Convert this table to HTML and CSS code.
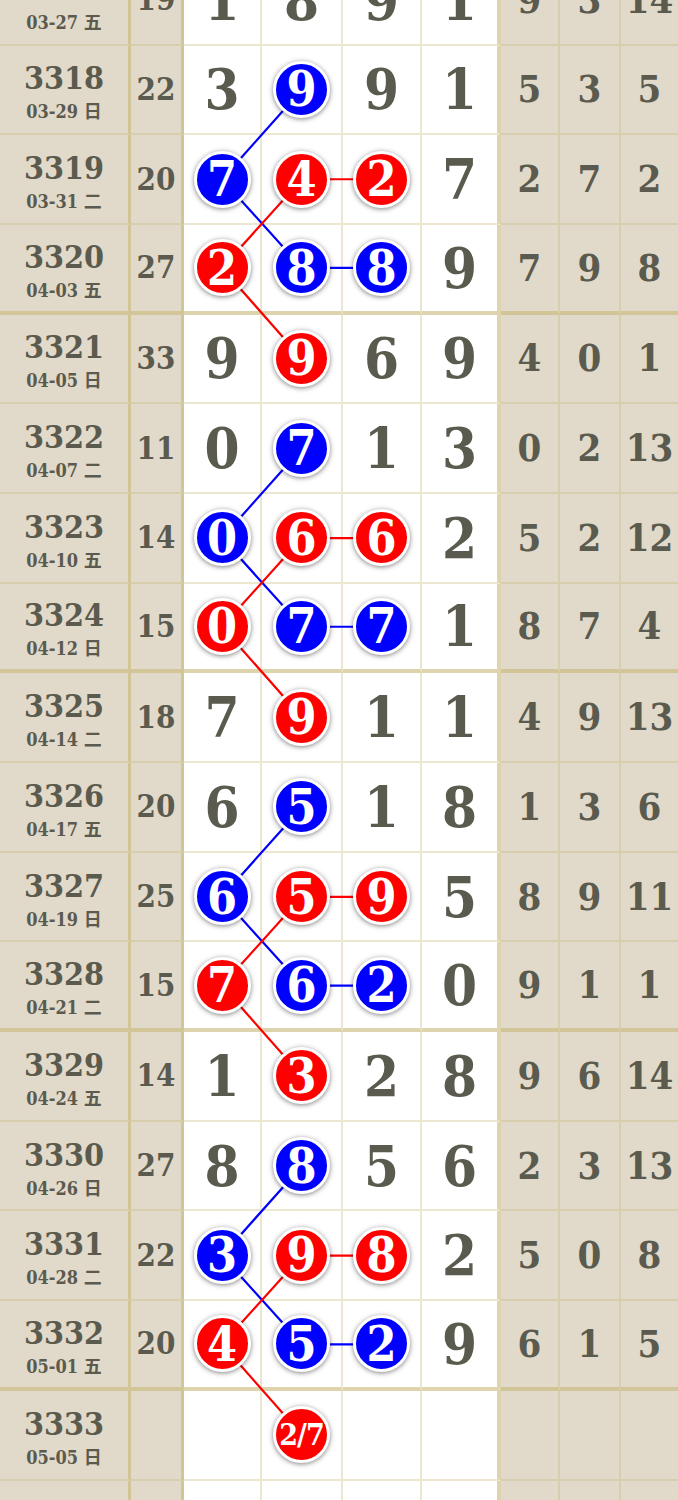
FILE: index.html
```html
<!DOCTYPE html>
<html lang="zh">
<head>
<meta charset="utf-8">
<title>走势图</title>
<link rel="stylesheet" href="styles.css">
</head>
<body>
<div class="sheet">
  <svg class="links" width="678" height="1615" viewBox="0 0 678 1615">
    <g fill="none" stroke-width="2.2">
      <polyline stroke="#0000ff" points="302,133.55 222,223.25 302,311.95"/>
      <polyline stroke="#ff0000" points="302,223.25 222,311.95 302,402.65"/>
      <line stroke="#ff0000" x1="302" y1="223.25" x2="381.5" y2="223.25"/>
      <line stroke="#0000ff" x1="302" y1="311.95" x2="381.5" y2="311.95"/>

      <polyline stroke="#0000ff" points="302,492.35 222,582.05 302,670.75"/>
      <polyline stroke="#ff0000" points="302,582.05 222,670.75 302,761.45"/>
      <line stroke="#ff0000" x1="302" y1="582.05" x2="381.5" y2="582.05"/>
      <line stroke="#0000ff" x1="302" y1="670.75" x2="381.5" y2="670.75"/>

      <polyline stroke="#0000ff" points="302,851.15 222,940.85 302,1029.55"/>
      <polyline stroke="#ff0000" points="302,940.85 222,1029.55 302,1120.25"/>
      <line stroke="#ff0000" x1="302" y1="940.85" x2="381.5" y2="940.85"/>
      <line stroke="#0000ff" x1="302" y1="1029.55" x2="381.5" y2="1029.55"/>

      <polyline stroke="#0000ff" points="302,1209.95 222,1299.65 302,1388.35"/>
      <polyline stroke="#ff0000" points="302,1299.65 222,1388.35 302,1479.05"/>
      <line stroke="#ff0000" x1="302" y1="1299.65" x2="381.5" y2="1299.65"/>
      <line stroke="#0000ff" x1="302" y1="1388.35" x2="381.5" y2="1388.35"/>
    </g>
  </svg>

  <div class="row">
    <div class="c k"><span class="no">3317</span><span class="dt">03-27 五</span></div>
    <div class="c s">19</div>
    <div class="c d">1</div><div class="c d">8</div><div class="c d">9</div><div class="c d">1</div>
    <div class="c x">9</div><div class="c x">3</div><div class="c x">14</div>
  </div>
  <div class="row">
    <div class="c k"><span class="no">3318</span><span class="dt">03-29 日</span></div>
    <div class="c s">22</div>
    <div class="c d">3</div><div class="c d"><span class="ball blue">9</span></div><div class="c d">9</div><div class="c d">1</div>
    <div class="c x">5</div><div class="c x">3</div><div class="c x">5</div>
  </div>
  <div class="row">
    <div class="c k"><span class="no">3319</span><span class="dt">03-31 二</span></div>
    <div class="c s">20</div>
    <div class="c d"><span class="ball blue">7</span></div><div class="c d"><span class="ball red">4</span></div><div class="c d"><span class="ball red">2</span></div><div class="c d">7</div>
    <div class="c x">2</div><div class="c x">7</div><div class="c x">2</div>
  </div>
  <div class="row end">
    <div class="c k"><span class="no">3320</span><span class="dt">04-03 五</span></div>
    <div class="c s">27</div>
    <div class="c d"><span class="ball red">2</span></div><div class="c d"><span class="ball blue">8</span></div><div class="c d"><span class="ball blue">8</span></div><div class="c d">9</div>
    <div class="c x">7</div><div class="c x">9</div><div class="c x">8</div>
  </div>
  <div class="row">
    <div class="c k"><span class="no">3321</span><span class="dt">04-05 日</span></div>
    <div class="c s">33</div>
    <div class="c d">9</div><div class="c d"><span class="ball red">9</span></div><div class="c d">6</div><div class="c d">9</div>
    <div class="c x">4</div><div class="c x">0</div><div class="c x">1</div>
  </div>
  <div class="row">
    <div class="c k"><span class="no">3322</span><span class="dt">04-07 二</span></div>
    <div class="c s">11</div>
    <div class="c d">0</div><div class="c d"><span class="ball blue">7</span></div><div class="c d">1</div><div class="c d">3</div>
    <div class="c x">0</div><div class="c x">2</div><div class="c x">13</div>
  </div>
  <div class="row">
    <div class="c k"><span class="no">3323</span><span class="dt">04-10 五</span></div>
    <div class="c s">14</div>
    <div class="c d"><span class="ball blue">0</span></div><div class="c d"><span class="ball red">6</span></div><div class="c d"><span class="ball red">6</span></div><div class="c d">2</div>
    <div class="c x">5</div><div class="c x">2</div><div class="c x">12</div>
  </div>
  <div class="row end">
    <div class="c k"><span class="no">3324</span><span class="dt">04-12 日</span></div>
    <div class="c s">15</div>
    <div class="c d"><span class="ball red">0</span></div><div class="c d"><span class="ball blue">7</span></div><div class="c d"><span class="ball blue">7</span></div><div class="c d">1</div>
    <div class="c x">8</div><div class="c x">7</div><div class="c x">4</div>
  </div>
  <div class="row">
    <div class="c k"><span class="no">3325</span><span class="dt">04-14 二</span></div>
    <div class="c s">18</div>
    <div class="c d">7</div><div class="c d"><span class="ball red">9</span></div><div class="c d">1</div><div class="c d">1</div>
    <div class="c x">4</div><div class="c x">9</div><div class="c x">13</div>
  </div>
  <div class="row">
    <div class="c k"><span class="no">3326</span><span class="dt">04-17 五</span></div>
    <div class="c s">20</div>
    <div class="c d">6</div><div class="c d"><span class="ball blue">5</span></div><div class="c d">1</div><div class="c d">8</div>
    <div class="c x">1</div><div class="c x">3</div><div class="c x">6</div>
  </div>
  <div class="row">
    <div class="c k"><span class="no">3327</span><span class="dt">04-19 日</span></div>
    <div class="c s">25</div>
    <div class="c d"><span class="ball blue">6</span></div><div class="c d"><span class="ball red">5</span></div><div class="c d"><span class="ball red">9</span></div><div class="c d">5</div>
    <div class="c x">8</div><div class="c x">9</div><div class="c x">11</div>
  </div>
  <div class="row end">
    <div class="c k"><span class="no">3328</span><span class="dt">04-21 二</span></div>
    <div class="c s">15</div>
    <div class="c d"><span class="ball red">7</span></div><div class="c d"><span class="ball blue">6</span></div><div class="c d"><span class="ball blue">2</span></div><div class="c d">0</div>
    <div class="c x">9</div><div class="c x">1</div><div class="c x">1</div>
  </div>
  <div class="row">
    <div class="c k"><span class="no">3329</span><span class="dt">04-24 五</span></div>
    <div class="c s">14</div>
    <div class="c d">1</div><div class="c d"><span class="ball red">3</span></div><div class="c d">2</div><div class="c d">8</div>
    <div class="c x">9</div><div class="c x">6</div><div class="c x">14</div>
  </div>
  <div class="row">
    <div class="c k"><span class="no">3330</span><span class="dt">04-26 日</span></div>
    <div class="c s">27</div>
    <div class="c d">8</div><div class="c d"><span class="ball blue">8</span></div><div class="c d">5</div><div class="c d">6</div>
    <div class="c x">2</div><div class="c x">3</div><div class="c x">13</div>
  </div>
  <div class="row">
    <div class="c k"><span class="no">3331</span><span class="dt">04-28 二</span></div>
    <div class="c s">22</div>
    <div class="c d"><span class="ball blue">3</span></div><div class="c d"><span class="ball red">9</span></div><div class="c d"><span class="ball red">8</span></div><div class="c d">2</div>
    <div class="c x">5</div><div class="c x">0</div><div class="c x">8</div>
  </div>
  <div class="row end">
    <div class="c k"><span class="no">3332</span><span class="dt">05-01 五</span></div>
    <div class="c s">20</div>
    <div class="c d"><span class="ball red">4</span></div><div class="c d"><span class="ball blue">5</span></div><div class="c d"><span class="ball blue">2</span></div><div class="c d">9</div>
    <div class="c x">6</div><div class="c x">1</div><div class="c x">5</div>
  </div>
  <div class="row">
    <div class="c k"><span class="no">3333</span><span class="dt">05-05 日</span></div>
    <div class="c s"></div>
    <div class="c d"></div><div class="c d"><span class="ball red pair">2/7</span></div><div class="c d"></div><div class="c d"></div>
    <div class="c x"></div><div class="c x"></div><div class="c x"></div>
  </div>
  <div class="row">
    <div class="c k"></div>
    <div class="c s"></div>
    <div class="c d"></div><div class="c d"></div><div class="c d"></div><div class="c d"></div>
    <div class="c x"></div><div class="c x"></div><div class="c x"></div>
  </div>
</div>
</body>
</html>
```

FILE: styles.css
```css
html, body {
  margin: 0;
  padding: 0;
  background: #ffffff;
}

.sheet {
  position: relative;
  width: 678px;
  margin-top: -44.2px;
  font-family: "DejaVu Serif", "Noto Sans CJK SC", serif;
  font-stretch: condensed;
  font-weight: bold;
  color: #5a5b4e;
}

.links {
  position: absolute;
  left: 0;
  top: 0;
  z-index: 1;
}

.row {
  display: grid;
  grid-template-columns: 131px 53px 78px 81px 79px 79px 59px 61px 57px;
  height: 89.7px;
}

.c {
  box-sizing: border-box;
  display: flex;
  align-items: center;
  justify-content: center;
  border-right: 2px solid rgba(200, 185, 120, 0.35);
  border-bottom: 2px solid rgba(200, 185, 120, 0.35);
  line-height: 1;
}

.row.end .c {
  border-bottom: 4px solid rgba(200, 185, 120, 0.6);
}

.c:nth-child(1),
.c:nth-child(2) {
  border-right: 3px solid rgba(200, 185, 120, 0.6);
}

.c:nth-child(6) {
  border-right: 4px solid rgba(200, 185, 120, 0.6);
}

.c:last-child {
  border-right: 0;
}

.k, .s, .x {
  background: #e1d9c9;
}

.d {
  background: #ffffff;
  font-size: 56px;
}

.k {
  flex-direction: column;
  padding-top: 6px;
}

.no {
  font-size: 32px;
  line-height: 36px;
}

.dt {
  font-size: 18px;
  line-height: 24px;
  margin-top: 4px;
}

.s {
  font-size: 31px;
}

.x {
  font-size: 38px;
}

.ball {
  position: relative;
  z-index: 2;
  box-sizing: border-box;
  width: 57px;
  height: 57px;
  border: 3px solid #ffffff;
  border-radius: 50%;
  display: flex;
  align-items: center;
  justify-content: center;
  color: #ffffff;
  font-size: 48px;
  line-height: 1;
  box-shadow: 0 1px 5px rgba(0, 0, 0, 0.5);
}

.ball.blue {
  background: #0000ff;
}

.ball.red {
  background: #ff0000;
}

.ball.pair {
  font-size: 30px;
  letter-spacing: -1px;
}
```
